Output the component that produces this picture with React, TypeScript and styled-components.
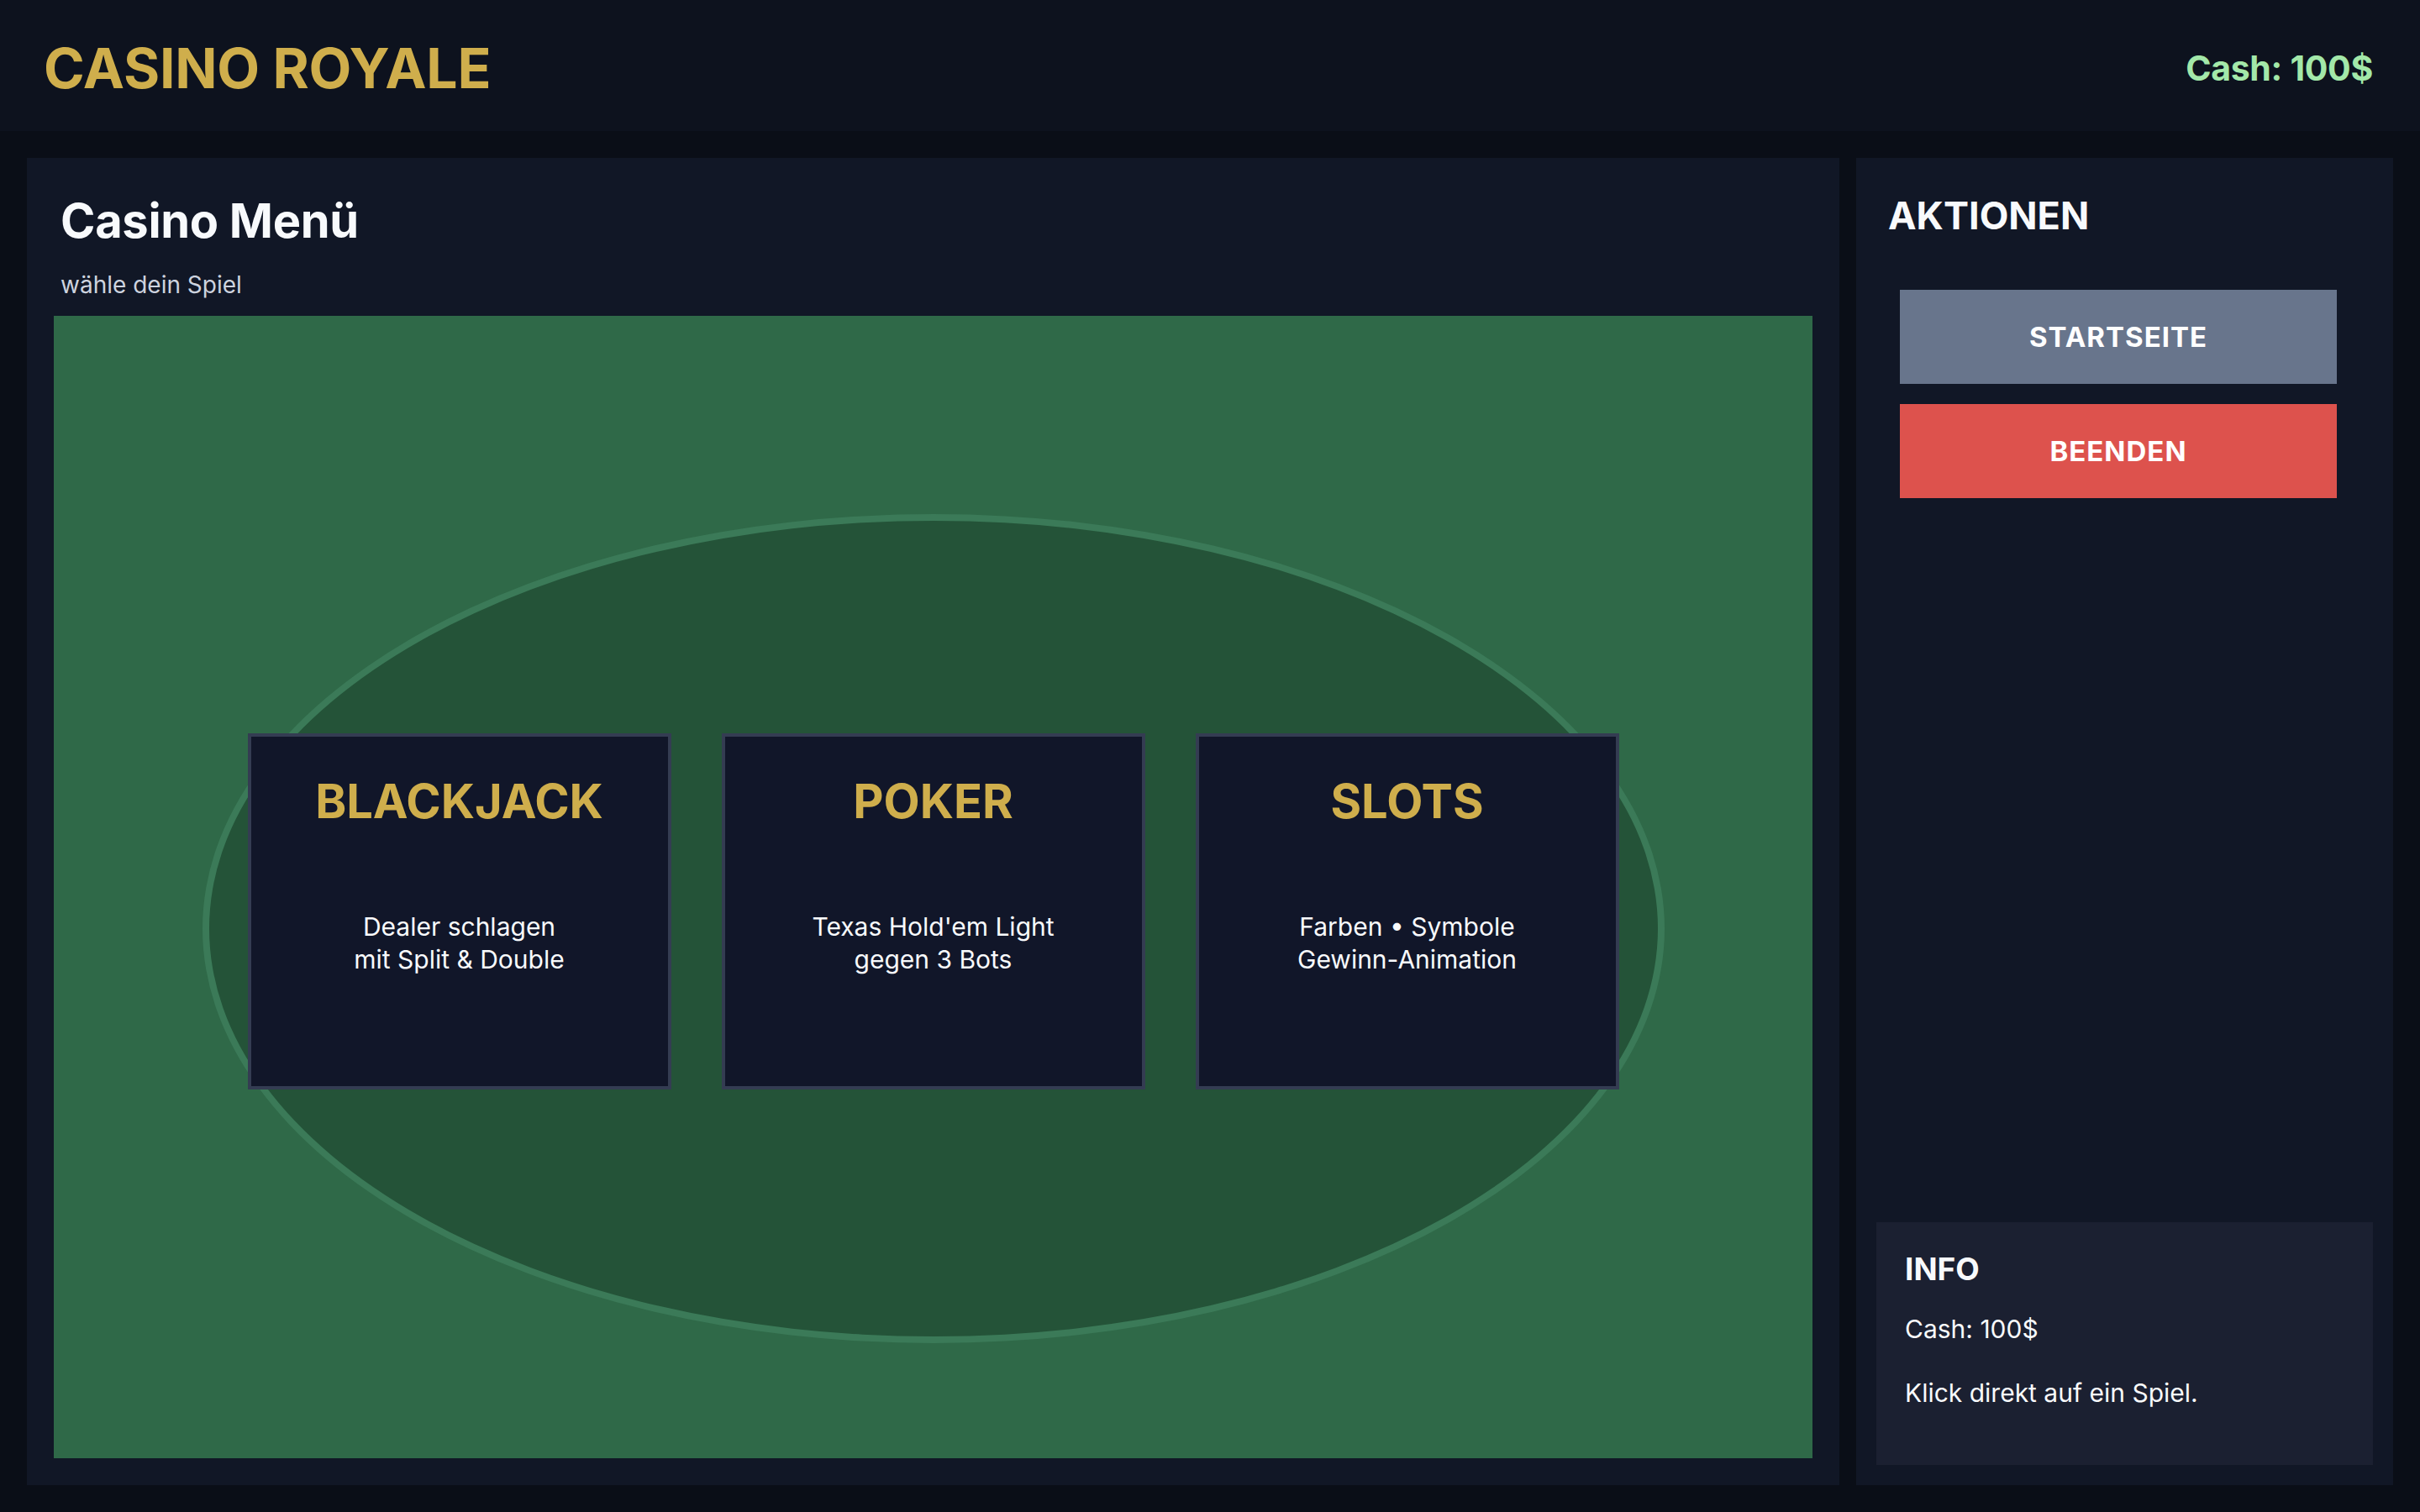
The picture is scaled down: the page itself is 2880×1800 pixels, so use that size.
import React from "react";
import styled, { createGlobalStyle } from "styled-components";

const Global = createGlobalStyle`
  * { box-sizing: border-box; }
  html, body { margin: 0; padding: 0; height: 100%; }
  body {
    background: #0a0e17;
    font-family: Inter, "Noto Sans", "Liberation Sans", sans-serif;
    color: #f8fafc;
  }
  #root { height: 100%; }
`;

const Page = styled.div`
  height: 100vh;
  display: flex;
  flex-direction: column;
`;

const TopBar = styled.header`
  height: 156px;
  flex: none;
  background: #0d121e;
  display: flex;
  align-items: center;
  justify-content: space-between;
  padding: 5px 56px 0 52px;
`;

const Brand = styled.h1`
  margin: 0;
  font-size: 66px;
  line-height: 1;
  font-weight: 700;
  color: #cfae4c;
  letter-spacing: -0.2px;
`;

const Cash = styled.div`
  font-size: 41px;
  font-weight: 700;
  color: #a3e8a9;
  letter-spacing: -0.3px;
`;

const Main = styled.main`
  flex: 1;
  min-height: 0;
  padding: 32px;
  display: grid;
  grid-template-columns: 1fr 639px;
  gap: 20px;
`;

const Panel = styled.section`
  background: #111726;
  display: flex;
  flex-direction: column;
  min-height: 0;
`;

const PanelHead = styled.div`
  padding: 41px 40px 20px;
`;

const Title = styled.h2`
  margin: 0;
  font-size: 56px;
  line-height: 68px;
  font-weight: 700;
  color: #f8fafc;
  letter-spacing: -0.3px;
`;

const Subtitle = styled.p`
  margin: 25px 0 0;
  font-size: 28px;
  line-height: 34px;
  color: #cdd3df;
`;

const Table = styled.div`
  position: relative;
  flex: 1;
  margin: 0 32px 32px;
  background: #2f6948;
  display: flex;
  align-items: center;
  justify-content: center;
  gap: 60px;
  padding-top: 58px;
  overflow: hidden;
`;

const Felt = styled.div`
  position: absolute;
  left: 177px;
  right: 176px;
  top: 236px;
  height: 987px;
  border-radius: 50%;
  background: #245338;
  border: 8px solid #3b7a58;
`;

const GameCard = styled.button`
  position: relative;
  width: 504px;
  height: 424px;
  background: #111629;
  border: 4px solid #343c52;
  padding: 43px 20px 0;
  display: flex;
  flex-direction: column;
  align-items: center;
  font-family: inherit;
  cursor: pointer;
`;

const GameName = styled.div`
  font-size: 56px;
  line-height: 68px;
  font-weight: 700;
  color: #cfae4c;
`;

const GameDesc = styled.div`
  margin-top: 96px;
  font-size: 30px;
  line-height: 39px;
  color: #f8fafc;
  text-align: center;
`;

const SidePanel = styled(Panel)`
  padding: 0 24px 24px;
`;

const SideTitle = styled.h2`
  margin: 0;
  padding: 42px 14px 0;
  font-size: 45px;
  line-height: 54px;
  font-weight: 700;
  color: #f8fafc;
`;

const Actions = styled.div`
  margin-top: 61px;
  padding-left: 28px;
  display: flex;
  flex-direction: column;
  gap: 24px;
`;

const ActionButton = styled.button<{ $tone: "grey" | "red" }>`
  width: 520px;
  height: 112px;
  border: none;
  background: ${(p) => (p.$tone === "red" ? "#dd524d" : "#68758c")};
  color: #ffffff;
  font-family: inherit;
  font-size: 33px;
  font-weight: 700;
  letter-spacing: 1px;
  cursor: pointer;
`;

const InfoBox = styled.div`
  margin-top: auto;
  background: #1b2031;
  padding: 33px 34px 67px;
`;

const InfoTitle = styled.h3`
  margin: 0 0 30px;
  font-size: 37px;
  line-height: 45px;
  font-weight: 700;
  color: #f8fafc;
`;

const InfoLine = styled.p<{ $gap?: boolean }>`
  margin: ${(p) => (p.$gap ? "38px 0 0" : "0")};
  font-size: 30px;
  line-height: 38px;
  color: #f8fafc;
`;

const games = [
  { name: "BLACKJACK", lines: ["Dealer schlagen", "mit Split & Double"] },
  { name: "POKER", lines: ["Texas Hold'em Light", "gegen 3 Bots"] },
  { name: "SLOTS", lines: ["Farben • Symbole", "Gewinn-Animation"] },
];

export default function App() {
  return (
    <Page>
      <Global />
      <TopBar>
        <Brand>CASINO ROYALE</Brand>
        <Cash>Cash: 100$</Cash>
      </TopBar>
      <Main>
        <Panel>
          <PanelHead>
            <Title>Casino Menü</Title>
            <Subtitle>wähle dein Spiel</Subtitle>
          </PanelHead>
          <Table>
            <Felt />
            {games.map((g) => (
              <GameCard key={g.name}>
                <GameName>{g.name}</GameName>
                <GameDesc>
                  {g.lines[0]}
                  <br />
                  {g.lines[1]}
                </GameDesc>
              </GameCard>
            ))}
          </Table>
        </Panel>
        <SidePanel>
          <SideTitle>AKTIONEN</SideTitle>
          <Actions>
            <ActionButton $tone="grey">STARTSEITE</ActionButton>
            <ActionButton $tone="red">BEENDEN</ActionButton>
          </Actions>
          <InfoBox>
            <InfoTitle>INFO</InfoTitle>
            <InfoLine>Cash: 100$</InfoLine>
            <InfoLine $gap>Klick direkt auf ein Spiel.</InfoLine>
          </InfoBox>
        </SidePanel>
      </Main>
    </Page>
  );
}
